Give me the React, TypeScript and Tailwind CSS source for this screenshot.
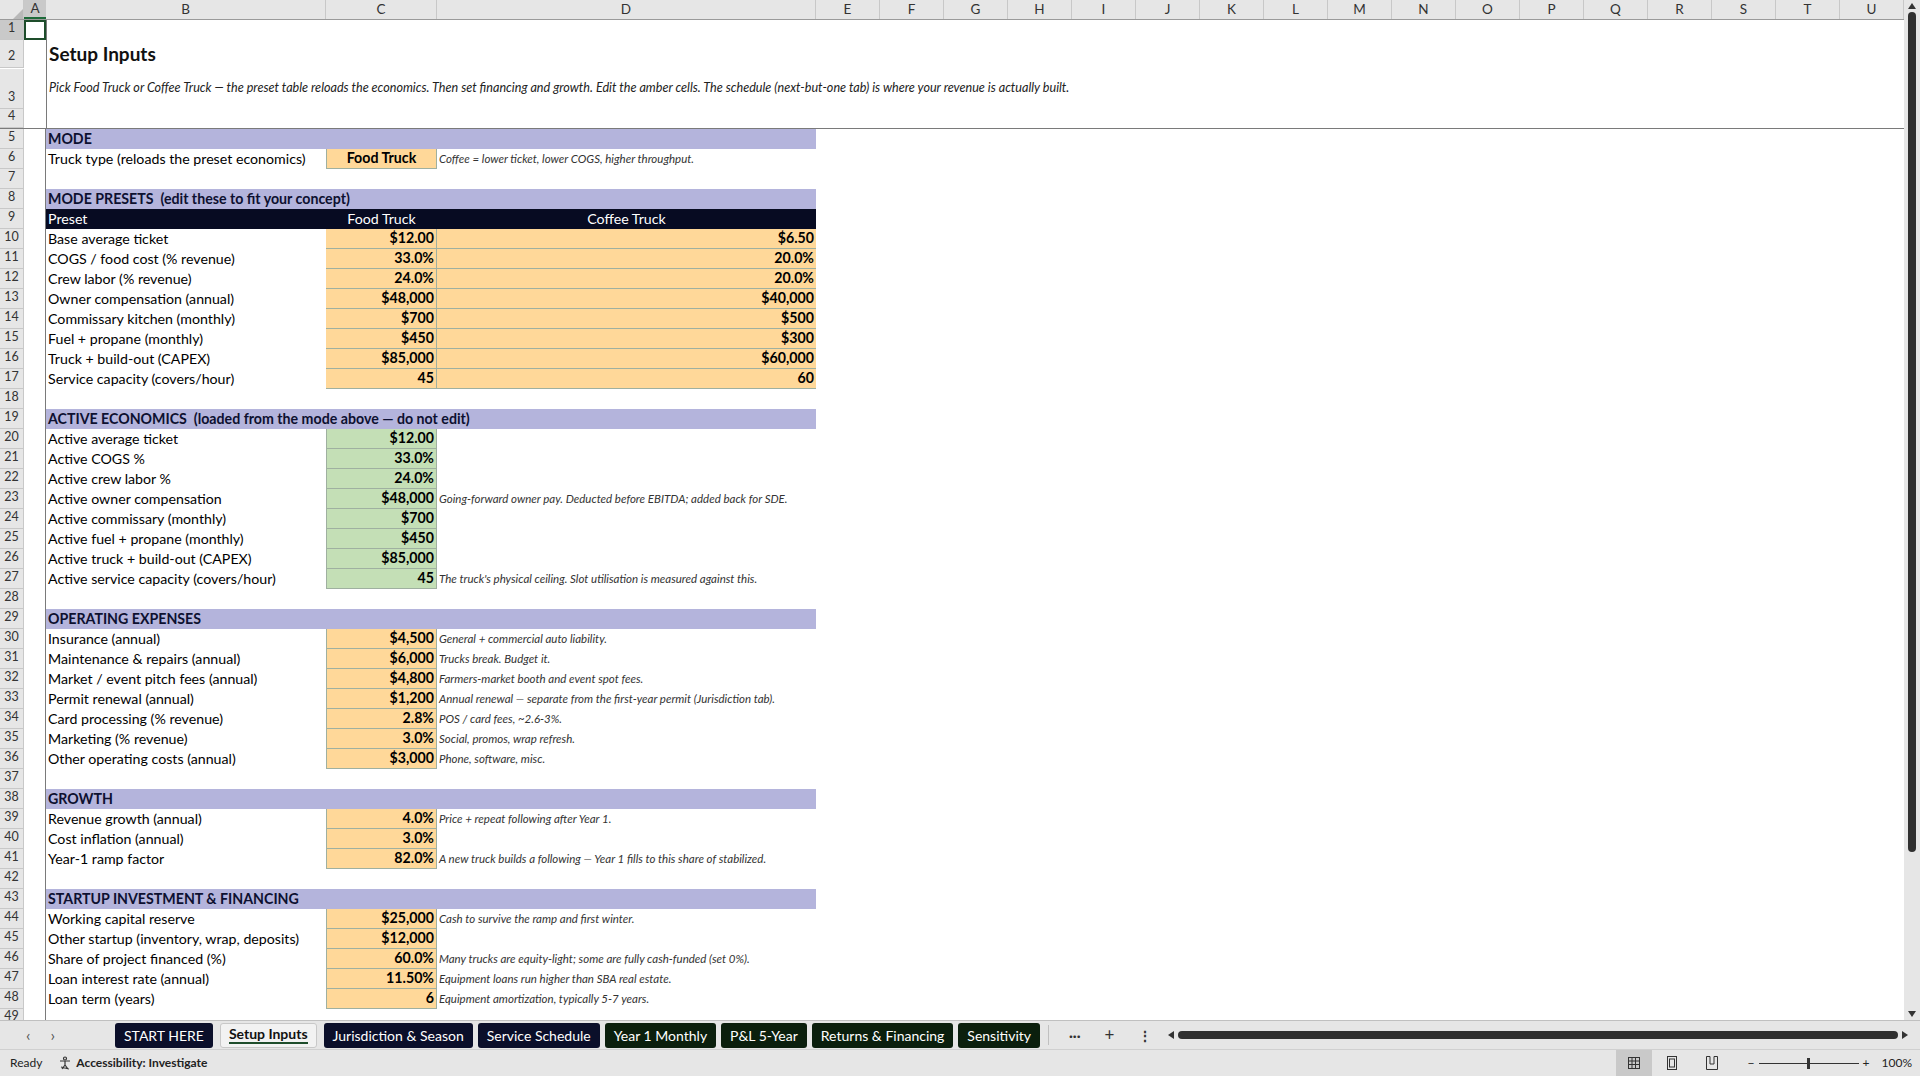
const cols = ['E', 'F', 'G', 'H', 'I', 'J', 'K', 'L', 'M', 'N', 'O', 'P', 'Q', 'R', 'S', 'T', 'U']

type Row =
  | { n: number; kind: 'empty' }
  | { n: number; kind: 'section'; text: string }
  | { n: number; kind: 'head' }
  | { n: number; kind: 'preset'; label: string; a: string; b: string }
  | { n: number; kind: 'input'; label: string; value: string; tone: 'amber' | 'green'; note?: string; center?: boolean }

const rows: Row[] = [
  { n: 5, kind: 'section', text: 'MODE' },
  { n: 6, kind: 'input', label: 'Truck type (reloads the preset economics)', value: 'Food Truck', tone: 'amber', center: true, note: 'Coffee = lower ticket, lower COGS, higher throughput.' },
  { n: 7, kind: 'empty' },
  { n: 8, kind: 'section', text: 'MODE PRESETS  (edit these to fit your concept)' },
  { n: 9, kind: 'head' },
  { n: 10, kind: 'preset', label: 'Base average ticket', a: '$12.00', b: '$6.50' },
  { n: 11, kind: 'preset', label: 'COGS / food cost (% revenue)', a: '33.0%', b: '20.0%' },
  { n: 12, kind: 'preset', label: 'Crew labor (% revenue)', a: '24.0%', b: '20.0%' },
  { n: 13, kind: 'preset', label: 'Owner compensation (annual)', a: '$48,000', b: '$40,000' },
  { n: 14, kind: 'preset', label: 'Commissary kitchen (monthly)', a: '$700', b: '$500' },
  { n: 15, kind: 'preset', label: 'Fuel + propane (monthly)', a: '$450', b: '$300' },
  { n: 16, kind: 'preset', label: 'Truck + build-out (CAPEX)', a: '$85,000', b: '$60,000' },
  { n: 17, kind: 'preset', label: 'Service capacity (covers/hour)', a: '45', b: '60' },
  { n: 18, kind: 'empty' },
  { n: 19, kind: 'section', text: 'ACTIVE ECONOMICS  (loaded from the mode above — do not edit)' },
  { n: 20, kind: 'input', label: 'Active average ticket', value: '$12.00', tone: 'green' },
  { n: 21, kind: 'input', label: 'Active COGS %', value: '33.0%', tone: 'green' },
  { n: 22, kind: 'input', label: 'Active crew labor %', value: '24.0%', tone: 'green' },
  { n: 23, kind: 'input', label: 'Active owner compensation', value: '$48,000', tone: 'green', note: 'Going-forward owner pay. Deducted before EBITDA; added back for SDE.' },
  { n: 24, kind: 'input', label: 'Active commissary (monthly)', value: '$700', tone: 'green' },
  { n: 25, kind: 'input', label: 'Active fuel + propane (monthly)', value: '$450', tone: 'green' },
  { n: 26, kind: 'input', label: 'Active truck + build-out (CAPEX)', value: '$85,000', tone: 'green' },
  { n: 27, kind: 'input', label: 'Active service capacity (covers/hour)', value: '45', tone: 'green', note: "The truck's physical ceiling. Slot utilisation is measured against this." },
  { n: 28, kind: 'empty' },
  { n: 29, kind: 'section', text: 'OPERATING EXPENSES' },
  { n: 30, kind: 'input', label: 'Insurance (annual)', value: '$4,500', tone: 'amber', note: 'General + commercial auto liability.' },
  { n: 31, kind: 'input', label: 'Maintenance & repairs (annual)', value: '$6,000', tone: 'amber', note: 'Trucks break. Budget it.' },
  { n: 32, kind: 'input', label: 'Market / event pitch fees (annual)', value: '$4,800', tone: 'amber', note: 'Farmers-market booth and event spot fees.' },
  { n: 33, kind: 'input', label: 'Permit renewal (annual)', value: '$1,200', tone: 'amber', note: 'Annual renewal — separate from the first-year permit (Jurisdiction tab).' },
  { n: 34, kind: 'input', label: 'Card processing (% revenue)', value: '2.8%', tone: 'amber', note: 'POS / card fees, ~2.6-3%.' },
  { n: 35, kind: 'input', label: 'Marketing (% revenue)', value: '3.0%', tone: 'amber', note: 'Social, promos, wrap refresh.' },
  { n: 36, kind: 'input', label: 'Other operating costs (annual)', value: '$3,000', tone: 'amber', note: 'Phone, software, misc.' },
  { n: 37, kind: 'empty' },
  { n: 38, kind: 'section', text: 'GROWTH' },
  { n: 39, kind: 'input', label: 'Revenue growth (annual)', value: '4.0%', tone: 'amber', note: 'Price + repeat following after Year 1.' },
  { n: 40, kind: 'input', label: 'Cost inflation (annual)', value: '3.0%', tone: 'amber' },
  { n: 41, kind: 'input', label: 'Year-1 ramp factor', value: '82.0%', tone: 'amber', note: 'A new truck builds a following — Year 1 fills to this share of stabilized.' },
  { n: 42, kind: 'empty' },
  { n: 43, kind: 'section', text: 'STARTUP INVESTMENT & FINANCING' },
  { n: 44, kind: 'input', label: 'Working capital reserve', value: '$25,000', tone: 'amber', note: 'Cash to survive the ramp and first winter.' },
  { n: 45, kind: 'input', label: 'Other startup (inventory, wrap, deposits)', value: '$12,000', tone: 'amber' },
  { n: 46, kind: 'input', label: 'Share of project financed (%)', value: '60.0%', tone: 'amber', note: 'Many trucks are equity-light; some are fully cash-funded (set 0%).' },
  { n: 47, kind: 'input', label: 'Loan interest rate (annual)', value: '11.50%', tone: 'amber', note: 'Equipment loans run higher than SBA real estate.' },
  { n: 48, kind: 'input', label: 'Loan term (years)', value: '6', tone: 'amber', note: 'Equipment amortization, typically 5-7 years.' },
]

const grid = 'grid grid-cols-[24px_22px_280px_111px_379px_1fr]'

function RowNum({ n, h = 'h-5', sel = false }: { n: number; h?: string; sel?: boolean }) {
  return (
    <div className={`${h} flex items-end justify-center pb-[1px] text-[12.5px] text-[#333] border-b border-r border-[#c8c8c8] ${sel ? 'bg-[#c9c9c9]' : 'bg-[#e6e6e6]'}`}>
      {n}
    </div>
  )
}

function Note({ text }: { text?: string }) {
  return <div className="pl-[2px] flex items-center text-[11.5px] italic text-[#333] whitespace-nowrap">{text}</div>
}

function SheetRow({ row }: { row: Row }) {
  const num = <RowNum n={row.n} />
  if (row.kind === 'section')
    return (
      <div className={grid}>
        {num}
        <div />
        <div className="col-span-3 h-5 bg-[#b4b4dc] pl-[2px] flex items-center font-bold text-[#0d1030] whitespace-pre">{row.text}</div>
        <div />
      </div>
    )
  if (row.kind === 'head')
    return (
      <div className={grid}>
        {num}
        <div />
        <div className="h-5 bg-[#070b22] text-white pl-[2px] flex items-center">Preset</div>
        <div className="h-5 bg-[#070b22] text-white flex items-center justify-center">Food Truck</div>
        <div className="h-5 bg-[#070b22] text-white flex items-center justify-center">Coffee Truck</div>
        <div />
      </div>
    )
  if (row.kind === 'preset')
    return (
      <div className={grid}>
        {num}
        <div />
        <div className="h-5 pl-[2px] flex items-center">{row.label}</div>
        <div className="h-5 bg-[#ffd899] border-b border-r border-[#9fb0a0] flex items-center justify-end pr-[2px] font-bold">{row.a}</div>
        <div className="h-5 bg-[#ffd899] border-b border-[#9fb0a0] flex items-center justify-end pr-[2px] font-bold">{row.b}</div>
        <div />
      </div>
    )
  if (row.kind === 'input')
    return (
      <div className={grid}>
        {num}
        <div />
        <div className="h-5 pl-[2px] flex items-center whitespace-nowrap">{row.label}</div>
        <div
          className={`h-5 border-b border-x border-[#9fb0a0] flex items-center font-bold ${row.tone === 'amber' ? 'bg-[#ffd899]' : 'bg-[#c4dfb6]'} ${row.center ? 'justify-center' : 'justify-end pr-[2px]'}`}
        >
          {row.value}
        </div>
        <Note text={row.note} />
        <div />
      </div>
    )
  return (
    <div className={grid}>
      {num}
      <div className="h-5" />
    </div>
  )
}

const tabs = [
  { t: 'START HERE', c: 'bg-[#0b0f2a] text-white' },
  { t: 'Setup Inputs', c: 'active' },
  { t: 'Jurisdiction & Season', c: 'bg-[#0b0f2a] text-white' },
  { t: 'Service Schedule', c: 'bg-[#0b0f2a] text-white' },
  { t: 'Year 1 Monthly', c: 'bg-[#0b1f0d] text-white' },
  { t: 'P&L 5-Year', c: 'bg-[#0b1f0d] text-white' },
  { t: 'Returns & Financing', c: 'bg-[#0b1f0d] text-white' },
  { t: 'Sensitivity', c: 'bg-[#0b1f0d] text-white' },
]

export default function App() {
  return (
    <div className="w-[1920px] h-[1076px] overflow-hidden bg-white flex flex-col text-[14.2px] text-black" style={{ fontFamily: 'Lato, "Noto Sans", sans-serif' }}>
      <div className="flex-1 flex min-h-0">
        <div className="flex-1 flex flex-col min-w-0 overflow-hidden">
          {/* column headers */}
          <div className="flex h-5 bg-[#e6e6e6] border-b border-[#9a9a9a] text-[13.5px] text-[#333] shrink-0">
            <div className="w-[24px] border-r border-[#c8c8c8] flex items-end justify-end">
              <svg width="10" height="10" viewBox="0 0 10 10"><path d="M10 0V10H0Z" fill="#b8b8b8" /></svg>
            </div>
            <div className="w-[22px] bg-[#c9c9c9] border-b-2 border-[#1e6b3a] flex items-center justify-center">A</div>
            <div className="w-[280px] border-r border-[#c8c8c8] flex items-center justify-center">B</div>
            <div className="w-[111px] border-r border-[#c8c8c8] flex items-center justify-center">C</div>
            <div className="w-[379px] border-r border-[#c8c8c8] flex items-center justify-center">D</div>
            {cols.map((c) => (
              <div key={c} className="w-[64px] shrink-0 border-r border-[#c8c8c8] flex items-center justify-center">{c}</div>
            ))}
          </div>
          {/* top rows */}
          <div className={grid}>
            <RowNum n={1} sel />
            <div className="h-5 border-2 border-[#1e4d2b]" />
            <div className="border-l border-[#7a7a7a]" />
          </div>
          <div className={grid}>
            <RowNum n={2} h="h-[28px]" />
            <div />
            <div className="col-span-4 border-l border-[#7a7a7a] pl-[2px] flex items-end text-[19px] font-bold text-[#111]">Setup Inputs</div>
          </div>
          <div className={grid}>
            <RowNum n={3} h="h-[40px]" />
            <div />
            <div className="col-span-4 border-l border-[#7a7a7a] pl-[2px] pt-[10px] text-[12.6px] italic text-[#222] whitespace-nowrap">
              Pick Food Truck or Coffee Truck — the preset table reloads the economics. Then set financing and growth. Edit the amber cells. The schedule (next-but-one tab) is where your revenue is actually built.
            </div>
          </div>
          <div className={`${grid} border-b border-[#7a7a7a]`}>
            <RowNum n={4} h="h-[19px]" />
            <div />
            <div className="col-span-4 border-l border-[#7a7a7a]" />
          </div>
          <div className="relative">
            <div className="absolute left-[45px] top-0 bottom-0 w-px bg-[#7a7a7a]" />
            {rows.map((r) => (
              <SheetRow key={r.n} row={r} />
            ))}
            <div className={grid}>
              <div className="h-5 flex items-start justify-center text-[12.5px] leading-[14px] text-[#333] border-r border-[#c8c8c8] bg-[#e6e6e6]">49</div>
            </div>
          </div>
        </div>
        {/* vertical scrollbar */}
        <div className="w-4 bg-[#e6e6e6] flex flex-col items-center py-[3px] gap-[3px] shrink-0">
          <svg width="8" height="6" viewBox="0 0 8 6"><path d="M4 0L8 6H0Z" fill="#333" /></svg>
          <div className="w-[8px] h-[840px] rounded-full bg-[#303030]" />
          <div className="flex-1" />
          <svg width="8" height="6" viewBox="0 0 8 6"><path d="M0 0H8L4 6Z" fill="#333" /></svg>
        </div>
      </div>
      {/* tab bar */}
      <div className="h-[29px] shrink-0 bg-[#e6e6e6] border-t border-[#c0c0c0] flex items-center text-[14px]">
        <div className="w-[115px] flex gap-5 pl-[26px] text-[#555] text-[16px]">
          <span>‹</span>
          <span>›</span>
        </div>
        <div className="flex items-center gap-[5px]">
          {tabs.map((t) =>
            t.c === 'active' ? (
              <div key={t.t} className="h-[25px] px-[8px] mx-[2px] bg-[#f2f2f2] border border-[#c8c8c8] rounded-[3px] font-bold flex flex-col items-center justify-center text-[#111]">
                <span className="leading-4">{t.t}</span>
                <span className="w-full h-[2px] bg-[#1e4d2b]" />
              </div>
            ) : (
              <div key={t.t} className={`h-[25px] px-[9px] rounded-[3px] flex items-center ${t.c}`}>
                {t.t}
              </div>
            ),
          )}
        </div>
        <div className="w-px h-5 bg-[#c0c0c0] ml-[8px]" />
        <div className="flex items-center gap-6 ml-5 text-[#333]">
          <span className="font-bold">···</span>
          <span className="text-[17px]">+</span>
          <span className="font-bold">⋮</span>
        </div>
        <div className="flex items-center ml-4 flex-1 pr-[12px] gap-1">
          <svg width="6" height="8" viewBox="0 0 6 8"><path d="M6 0V8L0 4Z" fill="#333" /></svg>
          <div className="flex-1 h-[8px] rounded-full bg-[#303030]" />
          <svg width="6" height="8" viewBox="0 0 6 8"><path d="M0 0V8L6 4Z" fill="#333" /></svg>
        </div>
      </div>
      {/* status bar */}
      <div className="h-[27px] shrink-0 bg-[#e6e6e6] border-t border-[#d0d0d0] flex items-center text-[12px] text-[#222]">
        <span className="ml-[10px]">Ready</span>
        <svg className="ml-4" width="14" height="14" viewBox="0 0 14 14" fill="none" stroke="#333" strokeWidth="1.2">
          <circle cx="7" cy="2.5" r="1.5" />
          <path d="M2 5H12M7 5V9M7 9L4 13M7 9L10 13M3 11L11 13" />
        </svg>
        <span className="ml-1 font-bold">Accessibility: Investigate</span>
        <div className="flex-1" />
        <div className="h-full w-[36px] bg-[#c9c9c9] flex items-center justify-center">
          <svg width="14" height="14" viewBox="0 0 14 14" fill="none" stroke="#333"><rect x="1.5" y="1.5" width="11" height="11" /><path d="M1.5 5H12.5M1.5 8.5H12.5M5 1.5V12.5M8.5 1.5V12.5" /></svg>
        </div>
        <div className="w-[40px] flex justify-center">
          <svg width="12" height="14" viewBox="0 0 12 14" fill="none" stroke="#333"><rect x="1.5" y="0.5" width="9" height="13" /><rect x="3.5" y="3" width="5" height="8" /></svg>
        </div>
        <div className="w-[40px] flex justify-center">
          <svg width="14" height="14" viewBox="0 0 14 14" fill="none" stroke="#333"><path d="M1.5 0.5V13.5H12.5V0.5M1.5 0.5H5V8H9V0.5H12.5" /></svg>
        </div>
        <span className="ml-4">−</span>
        <div className="relative w-[100px] h-px bg-[#333] mx-1">
          <div className="absolute left-[48px] -top-[5px] w-[3px] h-[11px] bg-[#333]" />
        </div>
        <span>+</span>
        <span className="ml-3 mr-[8px]">100%</span>
      </div>
    </div>
  )
}
